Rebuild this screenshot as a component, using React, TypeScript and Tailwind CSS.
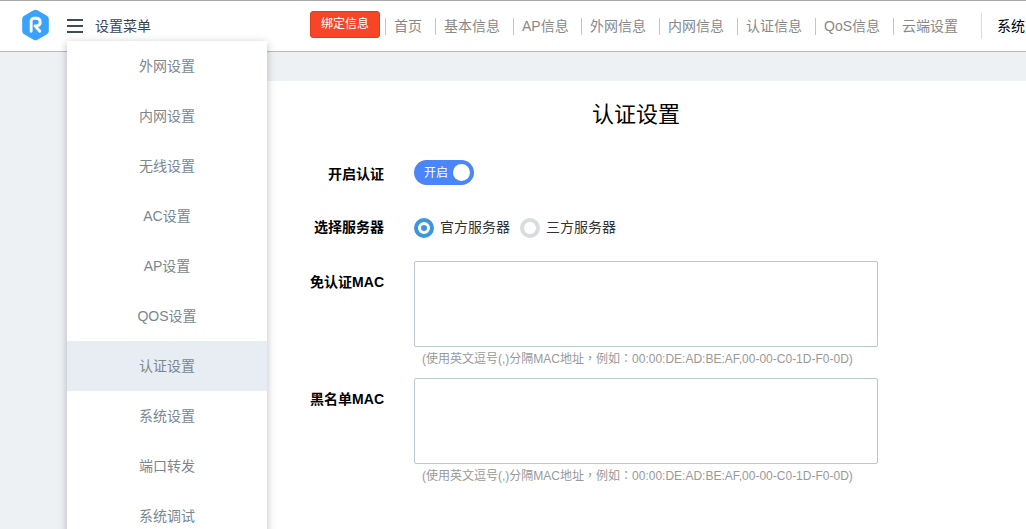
const NAV = [
  { label: '首页', w: 'w-[50px]' },
  { label: '基本信息', w: 'w-[78px]' },
  { label: 'AP信息', w: 'w-[68px]' },
  { label: '外网信息', w: 'w-[78px]' },
  { label: '内网信息', w: 'w-[78px]' },
  { label: '认证信息', w: 'w-[78px]' },
  { label: 'QoS信息', w: 'w-[78px]' },
  { label: '云端设置', w: 'w-[88px]' },
];

const MENU = ['外网设置', '内网设置', '无线设置', 'AC设置', 'AP设置', 'QOS设置', '认证设置', '系统设置', '端口转发', '系统调试'];

function Logo() {
  return (
    <svg width="27" height="32" viewBox="0 0 28 33" className="shrink-0">
      <path
        d="M12 1.2a4 4 0 0 1 4 0l9.8 5.6a4 4 0 0 1 2 3.4v12.6a4 4 0 0 1-2 3.4L16 31.8a4 4 0 0 1-4 0l-9.8-5.6a4 4 0 0 1-2-3.4V10.2a4 4 0 0 1 2-3.4z"
        fill="#3ba2fb"
      />
      <path
        d="M9.5 23V12.5a3 3 0 0 1 3-3h2.5a4 4 0 0 1 .8 7.9h-2.3l5 5.6"
        fill="none"
        stroke="#fff"
        strokeWidth="3"
        strokeLinecap="round"
        strokeLinejoin="round"
      />
    </svg>
  );
}

function FormRow({ label, children, className, labelClass }: { label: string; children: React.ReactNode; className: string; labelClass?: string }) {
  return (
    <div className={`flex ${className}`}>
      <div className={`w-[117px] shrink-0 text-right text-[14px] font-bold text-black ${labelClass ?? ''}`}>{label}</div>
      <div className="ml-[30px]">{children}</div>
    </div>
  );
}

function Radio({ checked, label }: { checked?: boolean; label: string }) {
  return (
    <label className="flex items-center text-[14px] text-[#333]">
      <span
        className={`flex h-5 w-5 items-center justify-center rounded-full border-[4px] bg-white ${
          checked ? 'border-[#3a97dc]' : 'border-[#d8dde0]'
        }`}
      >
        {checked && <span className="h-[6px] w-[6px] rounded-full bg-[#3a97dc]" />}
      </span>
      <span className="ml-[6px]">{label}</span>
    </label>
  );
}

// the full-width comma and colon sit centred in the picture, as in the TC cut of the font
function Hint() {
  const punct = "font-['Noto_Sans_CJK_TC',sans-serif]";
  return (
    <p className="h-[31px] whitespace-nowrap pl-2 pt-[2px] text-[12px] leading-[17px] text-[#999]">
      (使用英文逗号(,)分隔MAC地址<span className={punct}>，</span>例如<span className={punct}>：</span>00:00:DE:AD:BE:AF,00-00-C0-1D-F0-0D)
    </p>
  );
}

function MacField({ label }: { label: string }) {
  return (
    <FormRow label={label} className="" labelClass="pt-[11px]">
      <div className="h-[86px] w-[464px] rounded-[2px] border border-[#b8c8d0] bg-white" />
      <Hint />
    </FormRow>
  );
}

export default function App() {
  return (
    <div className="relative h-[529px] w-[1026px] overflow-hidden bg-white font-['Liberation_Sans','Noto_Sans_CJK_SC',sans-serif]">
      <header className="flex h-[52px] items-center overflow-hidden whitespace-nowrap border-t border-b border-t-[#aaa] border-b-[#bbb] bg-white">
        <div className="-mt-[2px] ml-[22px]">
          <Logo />
        </div>
        <div className="ml-[18px] flex h-[14px] w-4 shrink-0 flex-col justify-between">
          <span className="h-[2px] bg-[#3f4a5a]" />
          <span className="h-[2px] bg-[#3f4a5a]" />
          <span className="h-[2px] bg-[#3f4a5a]" />
        </div>
        <span className="ml-3 w-[56px] shrink-0 text-[14px] text-[#3a4552]">设置菜单</span>
        <button className="-mt-[4px] ml-[159px] h-[27px] w-[70px] shrink-0 rounded-[3px] border border-[#e23c20] bg-[#f74527] text-[12px] text-white">绑定信息</button>
        <nav className="ml-[5px] flex shrink-0 items-center">
          {NAV.map(n => (
            <a key={n.label} className={`h-[17px] shrink-0 border-l border-[#c4c4c4] pl-2 text-[14px] leading-[17px] text-[#888] ${n.w}`}>
              {n.label}
            </a>
          ))}
          <a className="flex h-[26px] items-center border-l border-[#ddd] pl-[15px] text-[14px] text-black">系统</a>
        </nav>
      </header>

      <div className="flex h-[477px]">
        <aside className="w-[267px] shrink-0 bg-[#eef1f4]" />
        <main className="min-w-0 flex-1">
          <div className="h-[29px] bg-[#eef1f4]" />
          <h1 className="h-[79px] pr-[21px] pt-[19px] text-center text-[22px] leading-[30px] text-black">认证设置</h1>
          <FormRow label="开启认证" className="h-[57px] leading-[28px]">
            <div className="relative flex h-[25px] w-[60px] items-center rounded-full bg-[#4a86f7] pl-[10px] text-[12px] text-white">
              开启
              <span className="absolute right-[4px] top-[4px] h-[17px] w-[17px] rounded-full bg-white" />
            </div>
          </FormRow>
          <FormRow label="选择服务器" className="h-[44px] leading-[21px]">
            <div className="flex gap-[10px]">
              <Radio checked label="官方服务器" />
              <Radio label="三方服务器" />
            </div>
          </FormRow>
          <MacField label="免认证MAC" />
          <MacField label="黑名单MAC" />
        </main>
      </div>

      <ul className="absolute left-[67px] top-[41px] w-[200px] bg-white shadow-[0_2px_8px_rgba(60,70,80,0.35)]">
        {MENU.map(m => (
          <li
            key={m}
            className={`flex h-[50px] items-center justify-center text-[14px] text-[#7c868f] ${
              m === '认证设置' ? 'bg-[#e8edf3]' : ''
            }`}
          >
            {m}
          </li>
        ))}
      </ul>
    </div>
  );
}
